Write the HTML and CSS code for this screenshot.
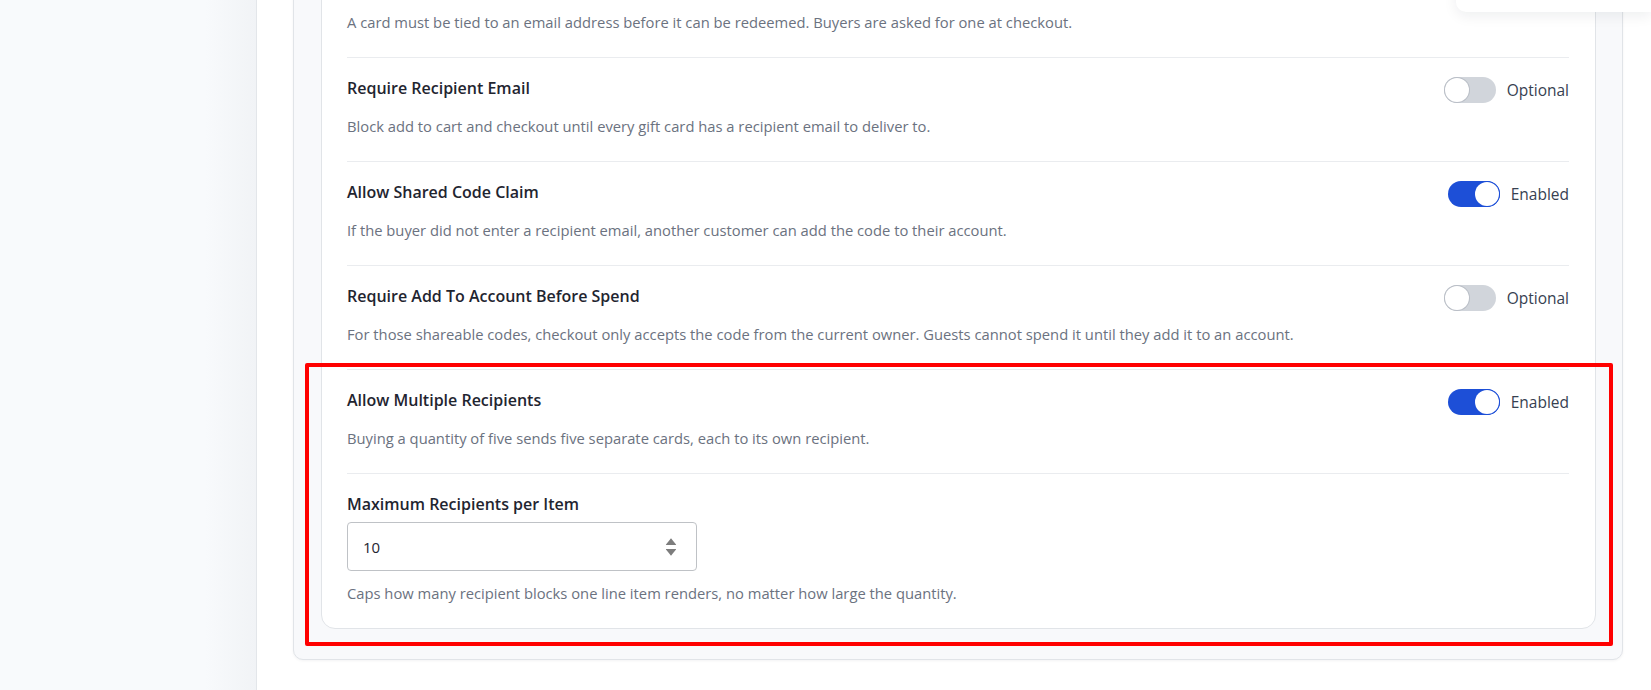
FILE: index.html
```html
<!DOCTYPE html>
<html lang="en">
<head>
<meta charset="utf-8">
<title>Gift card settings</title>
<link rel="stylesheet" href="styles.css">
</head>
<body>
<div class="app">
  <aside class="sidebar"></aside>
  <main class="main">
    <section class="outer-card">
      <div class="inner-card">
        <div class="row row-first">
          <p class="row-desc">A card must be tied to an email address before it can be redeemed. Buyers are asked for one at checkout.</p>
        </div>
        <div class="row">
          <div class="row-head">
            <h3 class="row-title">Require Recipient Email</h3>
            <div class="switch-group"><span class="switch"></span><span class="switch-label">Optional</span></div>
          </div>
          <p class="row-desc">Block add to cart and checkout until every gift card has a recipient email to deliver to.</p>
        </div>
        <div class="row">
          <div class="row-head">
            <h3 class="row-title">Allow Shared Code Claim</h3>
            <div class="switch-group"><span class="switch is-on"></span><span class="switch-label">Enabled</span></div>
          </div>
          <p class="row-desc">If the buyer did not enter a recipient email, another customer can add the code to their account.</p>
        </div>
        <div class="row">
          <div class="row-head">
            <h3 class="row-title">Require Add To Account Before Spend</h3>
            <div class="switch-group"><span class="switch"></span><span class="switch-label">Optional</span></div>
          </div>
          <p class="row-desc">For those shareable codes, checkout only accepts the code from the current owner. Guests cannot spend it until they add it to an account.</p>
        </div>
        <div class="row">
          <div class="row-head">
            <h3 class="row-title">Allow Multiple Recipients</h3>
            <div class="switch-group"><span class="switch is-on"></span><span class="switch-label">Enabled</span></div>
          </div>
          <p class="row-desc">Buying a quantity of five sends five separate cards, each to its own recipient.</p>
        </div>
        <div class="row row-field">
          <label class="row-title field-title" for="max-rec">Maximum Recipients per Item</label>
          <div class="num-input">
            <input id="max-rec" class="num-value" type="text" value="10">
            <svg class="spinner" width="12" height="20" viewBox="0 0 12 20" aria-hidden="true">
              <path d="M6 1.2 L11 7.4 Q11.3 8 10.6 8 L1.4 8 Q0.7 8 1 7.4 Z" fill="#7d7d7d"/>
              <path d="M6 18.8 L11 12.6 Q11.3 12 10.6 12 L1.4 12 Q0.7 12 1 12.6 Z" fill="#7d7d7d"/>
            </svg>
          </div>
          <p class="row-desc field-desc">Caps how many recipient blocks one line item renders, no matter how large the quantity.</p>
        </div>
      </div>
    </section>
  </main>
</div>
<div class="floating-panel"></div>
<div class="highlight-box"></div>
</body>
</html>
```

FILE: styles.css
```css
* { box-sizing: border-box; }

html, body {
  margin: 0;
  padding: 0;
  height: 690px;
  overflow: hidden;
  background: #ffffff;
  font-family: "Open Sans", "Noto Sans", "Liberation Sans", sans-serif;
}

.app {
  display: flex;
  height: 690px;
}

.sidebar {
  width: 257px;
  flex: 0 0 257px;
  background: linear-gradient(to right, #f8fafc 0%, #f8fafc 80%, #f1f3f6 100%);
  border-right: 1px solid #e3e6ea;
}

.main {
  flex: 1;
  padding: 0 28px 0 36px;
}

.outer-card {
  margin-top: -75px;
  background: #f8f9fb;
  border: 1px solid #e1e4e8;
  border-radius: 10px;
  padding: 26px 26px 30px 27px;
  box-shadow: 0 1px 3px rgba(15, 23, 42, 0.05);
}

.inner-card {
  background: #ffffff;
  border: 1px solid #e1e4e8;
  border-radius: 14px;
  padding: 0 26px 25px 25px;
}

.row {
  border-top: 1px solid #eaecef;
  padding: 18px 0 25px;
}

.row-first {
  border-top: 1px solid transparent;
  padding-top: 58px;
}

.row-first .row-desc { margin-top: 0; }

.row-head {
  display: flex;
  align-items: flex-start;
  justify-content: space-between;
  height: 27px;
}

.row-title {
  margin: 0;
  font-size: 16px;
  font-weight: 600;
  line-height: 24px;
  color: #1f2530;
}

.row-desc {
  margin: 13px 0 0;
  font-size: 14.75px;
  line-height: 20px;
  color: #6b7280;
}

.switch-group {
  display: flex;
  align-items: center;
  gap: 11px;
  margin-top: 1px;
}

.switch {
  position: relative;
  display: block;
  width: 52px;
  height: 26px;
  border-radius: 13px;
  background: #d1d5db;
}

.switch::after {
  content: "";
  position: absolute;
  top: 1px;
  left: 1px;
  width: 24px;
  height: 24px;
  border-radius: 50%;
  background: #ffffff;
  box-shadow: 0 0 0 1px #b9bec6;
}

.switch.is-on { background: #1d4fd7; }

.switch.is-on::after {
  left: 27px;
  box-shadow: 0 0 0 1px #1d4fd7;
}

.switch-label {
  font-size: 15.5px;
  line-height: 20px;
  color: #374151;
}

.row-field { padding-bottom: 0; }

.field-title { display: block; }

.num-input {
  display: flex;
  align-items: center;
  margin-top: 6px;
  width: 350px;
  height: 49px;
  border: 1px solid #bfc2c6;
  border-radius: 4px;
  background: #ffffff;
  padding: 0 19px 0 15px;
}

.num-value {
  flex: 1;
  border: none;
  outline: none;
  padding: 0;
  font-family: inherit;
  font-size: 15px;
  color: #1f2530;
  background: transparent;
}

.spinner { display: block; }

.field-desc { margin-top: 12px; }

.floating-panel {
  position: fixed;
  top: -40px;
  right: 0;
  width: 195px;
  height: 52px;
  background: #ffffff;
  border-radius: 0 0 0 10px;
  box-shadow: 0 4px 14px rgba(15, 23, 42, 0.07);
}

.highlight-box {
  position: fixed;
  left: 305px;
  top: 363px;
  width: 1308px;
  height: 283px;
  border: 4px solid #ff0000;
  border-radius: 2px;
  pointer-events: none;
}
```
